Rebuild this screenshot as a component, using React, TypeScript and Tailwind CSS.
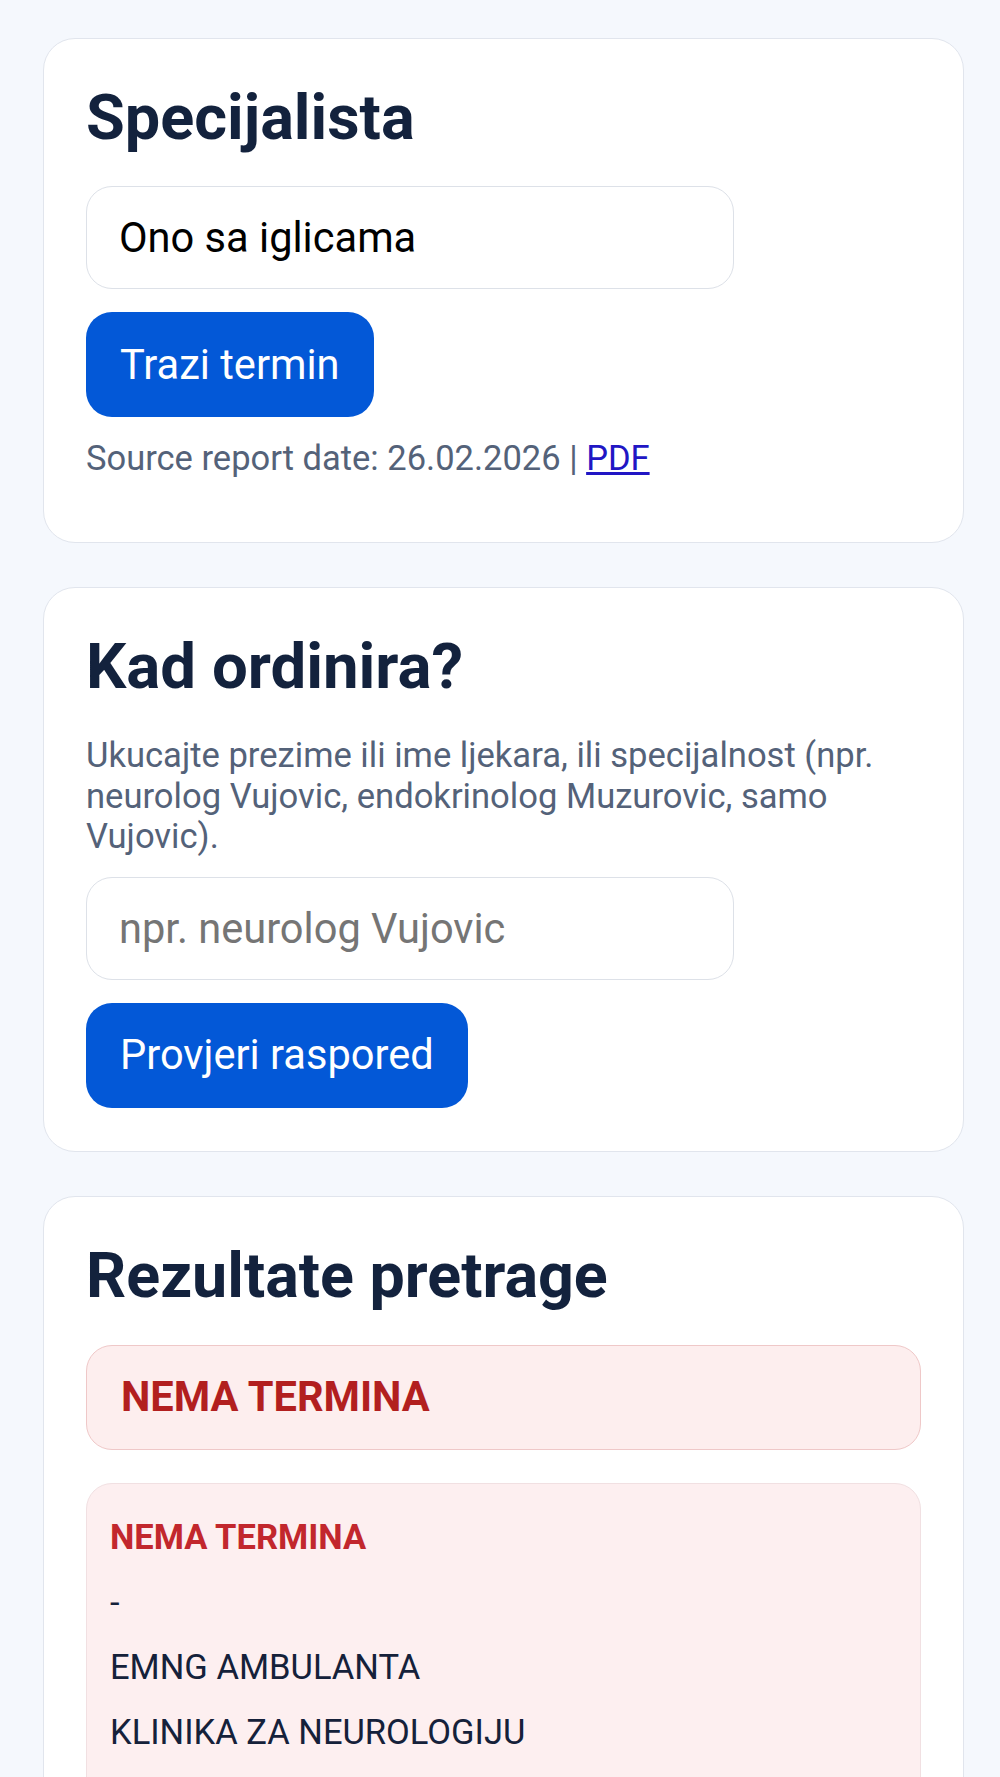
import React from "react";

export default function App() {
  return (
    <div className="min-h-screen bg-[#f5f8fd] pt-[38px] pl-[43px] pr-[36px] pb-[40px] font-['Roboto',sans-serif]">
      <div className="flex flex-col gap-[44px]">
        {/* Card 1 */}
        <section className="rounded-[32px] border border-[#e1e5ed] bg-white p-[42px] pb-[64px]">
          <h2 className="text-[63px] font-bold leading-[73px] text-[#13223d]">Specijalista</h2>
          <input
            className="mt-[32px] block h-[103px] w-[648px] rounded-[26px] border border-[#dde1e8] bg-white px-[32px] text-[41.6px] text-black outline-none"
            defaultValue="Ono sa iglicama"
          />
          <button className="mt-[23px] block h-[105px] rounded-[26px] bg-[#0358d7] px-[34px] text-[41.6px] leading-none text-white">
            Trazi termin
          </button>
          <p className="mt-[21px] text-[34.5px] leading-[40.4px] text-[#546279]">
            Source report date: 26.02.2026 |{" "}
            <a href="#" className="text-[#2116c4] underline">PDF</a>
          </p>
        </section>

        {/* Card 2 */}
        <section className="rounded-[32px] border border-[#e1e5ed] bg-white p-[42px] pb-[43px]">
          <h2 className="text-[63.5px] font-bold leading-[73px] text-[#13223d]">Kad ordinira?</h2>
          <p className="mt-[32px] text-[34.6px] leading-[40.4px] text-[#546279]">
            Ukucajte prezime ili ime ljekara, ili specijalnost (npr. neurolog Vujovic, endokrinolog Muzurovic, samo Vujovic).
          </p>
          <input
            className="mt-[20px] block h-[103px] w-[648px] rounded-[26px] border border-[#dde1e8] bg-white px-[32px] text-[41.6px] text-black outline-none placeholder:text-[#757575]"
            placeholder="npr. neurolog Vujovic"
          />
          <button className="mt-[23px] block h-[105px] rounded-[26px] bg-[#0358d7] px-[34px] text-[41.6px] leading-none text-white">
            Provjeri raspored
          </button>
        </section>

        {/* Card 3 */}
        <section className="rounded-[32px] border border-[#e1e5ed] bg-white p-[42px]">
          <h2 className="text-[62.8px] font-bold leading-[73px] text-[#13223d]">Rezultate pretrage</h2>
          <div className="mt-[33px] flex h-[105px] items-center rounded-[26px] border border-[#efc8c8] bg-[#fdeeee] px-[34px]">
            <span className="text-[41.6px] font-bold text-[#b21f1f]">NEMA TERMINA</span>
          </div>
          <div className="mt-[33px] rounded-[26px] border border-[#f1e0e2] bg-[#fdeff0] px-[23px] pt-[21px] pb-[60px] text-[34.5px] leading-[65px] text-[#15213a]">
            <div className="font-bold text-[#c2272d]">NEMA TERMINA</div>
            <div>-</div>
            <div>EMNG AMBULANTA</div>
            <div>KLINIKA ZA NEUROLOGIJU</div>
          </div>
        </section>
      </div>
    </div>
  );
}
